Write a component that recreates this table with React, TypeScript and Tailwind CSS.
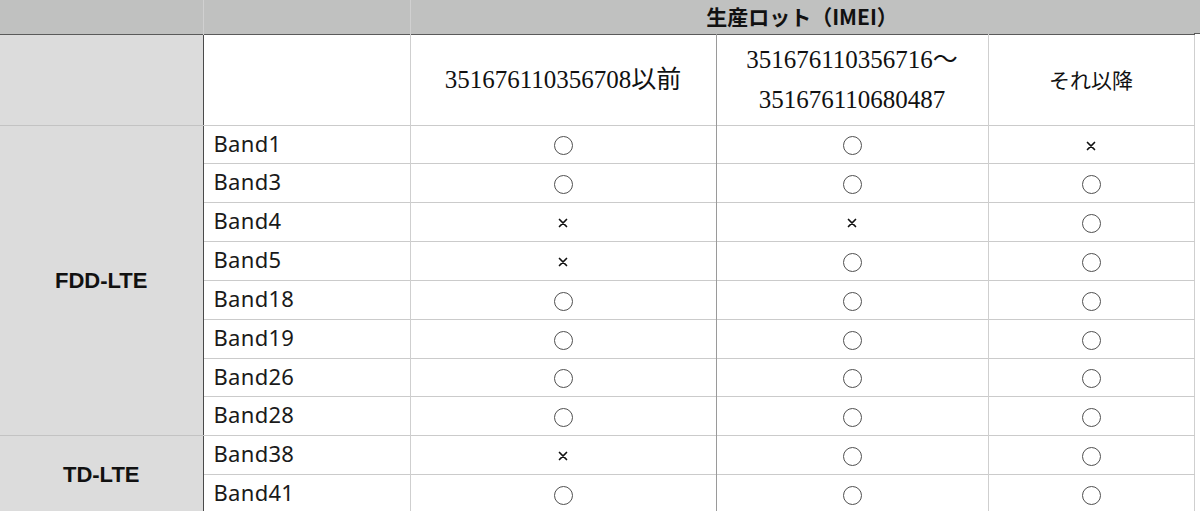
import React from 'react'

type Mark = 'o' | 'x'

interface BandRow {
  band: string
  marks: Mark[]
  h: number
}

const fdd: BandRow[] = [
  { band: 'Band1', marks: ['o', 'o', 'x'], h: 38 },
  { band: 'Band3', marks: ['o', 'o', 'o'], h: 39 },
  { band: 'Band4', marks: ['x', 'x', 'o'], h: 39 },
  { band: 'Band5', marks: ['x', 'o', 'o'], h: 39 },
  { band: 'Band18', marks: ['o', 'o', 'o'], h: 39 },
  { band: 'Band19', marks: ['o', 'o', 'o'], h: 39 },
  { band: 'Band26', marks: ['o', 'o', 'o'], h: 38 },
  { band: 'Band28', marks: ['o', 'o', 'o'], h: 39 },
]

const td: BandRow[] = [
  { band: 'Band38', marks: ['x', 'o', 'o'], h: 39 },
  { band: 'Band41', marks: ['o', 'o', 'o'], h: 39 },
]

const sans = "font-['Noto_Sans','Noto_Sans_CJK_JP',sans-serif]"
const bold = "font-['Liberation_Sans','Noto_Sans_CJK_JP',sans-serif]"
const jp = "font-['Noto_Sans_CJK_JP',sans-serif]"
const serif = "font-['Liberation_Serif','Noto_Sans_CJK_JP',serif]"

function MarkCell({ mark }: { mark: Mark }) {
  if (mark === 'o') {
    return (
      <span className="inline-block w-[19px] h-[19px] rounded-full border-[1.4px] border-[#505050] align-middle" />
    )
  }
  return (
    <svg width="10" height="10" viewBox="0 0 10 10" className="inline-block align-middle">
      <path d="M1.5 1.5 L8.5 8.5 M8.5 1.5 L1.5 8.5" stroke="#111" strokeWidth="1.7" strokeLinecap="round" />
    </svg>
  )
}

// colour of the vertical line left of each mark column
const markBorders = ['border-l-[#cfcfcf]', 'border-l-[#9a9a9a]', 'border-l-[#cfcfcf]']

function Rows({ label, rows }: { label: string; rows: BandRow[] }) {
  return (
    <>
      {rows.map((r, i) => (
        <tr key={r.band} style={{ height: r.h }} className="border-b border-[#cbcbcb]">
          {i === 0 && (
            <td
              rowSpan={rows.length}
              className={`bg-[#dcdcdc] text-center align-middle font-bold text-[22px] text-[#111] border-b border-[#c3c3c3] ${bold}`}
            >
              {label}
            </td>
          )}
          <td className={`pl-[10px] pb-[2px] text-[22px] tracking-[0.3px] text-[#1a1a1a] border-l border-l-[#4a4a4a] ${sans}`}>
            {r.band}
          </td>
          {r.marks.map((m, j) => (
            <td key={j} className={`text-center border-l ${markBorders[j]}`}>
              <MarkCell mark={m} />
            </td>
          ))}
        </tr>
      ))}
    </>
  )
}

export default function App() {
  return (
    <div className="w-[1200px] h-[511px] overflow-hidden bg-white relative">
      <div className="absolute top-0 right-0 w-[6px] h-[34px] bg-[#c0c1c0] border-b border-[#5a5a5a]" />
      <table className="w-[1194px] table-fixed border-collapse border-r border-r-[#cfcfcf]">
        <colgroup>
          <col style={{ width: 203 }} />
          <col style={{ width: 207 }} />
          <col style={{ width: 306 }} />
          <col style={{ width: 272 }} />
          <col style={{ width: 206 }} />
        </colgroup>
        <thead>
          <tr style={{ height: 34 }} className="bg-[#c0c1c0] border-b border-b-[#5a5a5a]">
            <th className="bg-[#c0c1c0]" />
            <th className="bg-[#c0c1c0] border-l border-l-[#d0d0d0]" />
            <th colSpan={3} className={`text-center font-bold text-[21px] leading-none text-[#111] border-l border-l-[#d0d0d0] ${jp}`}>
              生産ロット（IMEI）
            </th>
          </tr>
        </thead>
        <tbody>
          <tr style={{ height: 91 }} className="border-b border-[#cbcbcb]">
            <td className="bg-[#dcdcdc] border-b border-[#c3c3c3]" />
            <td className="border-l border-l-[#4a4a4a]" />
            <td className={`text-center text-[25px] text-[#111] border-l border-l-[#cfcfcf] ${serif}`}>
              351676110356708以前
            </td>
            <td className={`text-center text-[25px] leading-[40px] text-[#111] border-l border-l-[#9a9a9a] ${serif}`}>
              351676110356716〜
              <br />
              351676110680487
            </td>
            <td className={`text-center text-[21px] text-[#111] border-l border-l-[#cfcfcf] ${jp}`}>
              それ以降
            </td>
          </tr>
          <Rows label="FDD-LTE" rows={fdd} />
          <Rows label="TD-LTE" rows={td} />
        </tbody>
      </table>
    </div>
  )
}
